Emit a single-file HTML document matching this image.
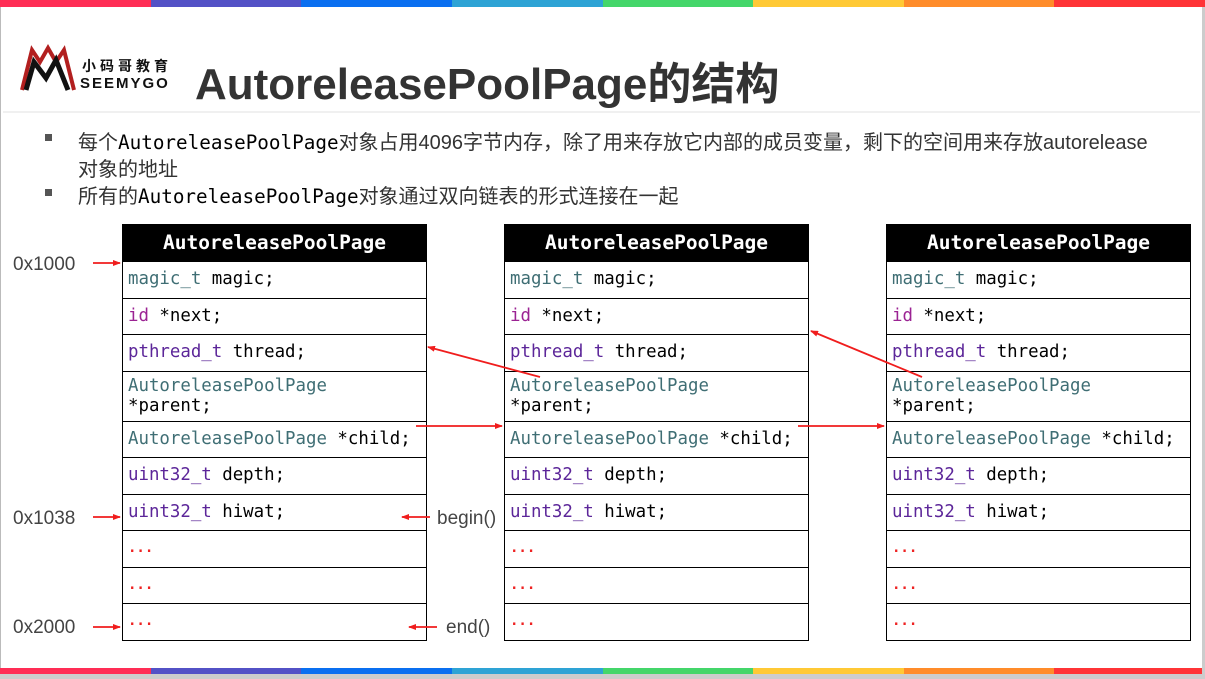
<!DOCTYPE html>
<html><head><meta charset="utf-8"><style>
*{margin:0;padding:0;box-sizing:border-box}
body{width:1205px;height:679px;overflow:hidden;background:#fff;position:relative;font-family:"Liberation Sans","Noto Sans CJK SC",sans-serif}
.bar{position:absolute;left:0;width:1205px;height:7px;display:flex}
.bar div{flex:1}
.t{position:absolute;left:0;width:305px;border:1.5px solid #000;border-top:none}
.t .h{height:37px;background:#000;color:#fff;font:bold 19.5px "DejaVu Sans Mono",monospace;text-align:center;line-height:37px}
.t .r{border-top:1.5px solid #000;height:36.5px;font:17.4px "DejaVu Sans Mono",monospace;padding-left:5px;line-height:34px;color:#000;white-space:nowrap}
.t .r2{height:50px;line-height:20px;padding-top:4px}
.tl{color:#3f6e74}.pu{color:#5c2699}.mg{color:#9b2393}
.t .r.dt{color:#e22;font-size:14px;font-weight:bold}
.lbl{position:absolute;font-size:19px;color:#444}
.bul{position:absolute;font-size:20px;color:#333;left:78px;white-space:nowrap}
.bul code{font-family:"DejaVu Sans Mono",monospace;font-size:19.3px;color:#000}
.sq{position:absolute;left:45px;width:7px;height:7px;background:#555}
</style></head><body>
<div class="bar" style="top:0"><div style="background:#ff2d55"></div><div style="background:#5351c6"></div><div style="background:#0a6ff0"></div><div style="background:#2ea3d5"></div><div style="background:#44d66a"></div><div style="background:#ffc935"></div><div style="background:#ff8c2a"></div><div style="background:#ff3437"></div></div>
<div class="bar" style="top:668px"><div style="background:#ff2d55"></div><div style="background:#5351c6"></div><div style="background:#0a6ff0"></div><div style="background:#2ea3d5"></div><div style="background:#44d66a"></div><div style="background:#ffc935"></div><div style="background:#ff8c2a"></div><div style="background:#ff3437"></div></div>
<div style="position:absolute;left:0;top:7px;width:1px;height:661px;background:#bbb"></div>
<div style="position:absolute;right:0;top:7px;width:3px;height:672px;background:#ccc"></div>
<div style="position:absolute;left:0;top:674px;width:1205px;height:5px;background:#ccc"></div>
<svg style="position:absolute;left:20px;top:40px" width="60" height="52" viewBox="0 0 60 52">
<path d="M2 50 L12 10 L20 22 L28 8 L36 22 L44 10 L54 50" fill="none" stroke="#b21f1f" stroke-width="4"/>
<path d="M6 50 L14 22 L26 38 L36 20 L48 50" fill="none" stroke="#111" stroke-width="5"/>
</svg>
<div style="position:absolute;left:82px;top:58px;font-size:14px;line-height:16px;font-weight:bold;letter-spacing:4px;color:#111">小码哥教育</div>
<div style="position:absolute;left:80px;top:76px;font-size:15px;line-height:16px;font-weight:bold;letter-spacing:2px;color:#111">SEEMYGO</div>
<div style="position:absolute;left:195px;top:48px;font-size:44px;font-weight:bold;color:#333">AutoreleasePoolPage的结构</div>
<div style="position:absolute;left:3px;top:111px;width:1197px;height:2px;background:#f0f0f0"></div>
<div class="sq" style="top:134px"></div>
<div class="bul" style="top:126px">每个<code>AutoreleasePoolPage</code>对象占用4096字节内存，除了用来存放它内部的成员变量，剩下的空间用来存放autorelease</div>
<div class="bul" style="top:153px">对象的地址</div>
<div class="sq" style="top:189px"></div>
<div class="bul" style="top:180px">所有的<code>AutoreleasePoolPage</code>对象通过双向链表的形式连接在一起</div>

<div class="t" style="left:122px;top:224px">
<div class="h">AutoreleasePoolPage</div>
<div class="r"><span class="tl">magic_t</span> magic;</div>
<div class="r"><span class="mg">id</span> *next;</div>
<div class="r"><span class="pu">pthread_t</span> thread;</div>
<div class="r r2"><span class="tl">AutoreleasePoolPage</span><br>*parent;</div>
<div class="r"><span class="tl">AutoreleasePoolPage</span> *child;</div>
<div class="r"><span class="pu">uint32_t</span> depth;</div>
<div class="r"><span class="pu">uint32_t</span> hiwat;</div>
<div class="r dt">...</div><div class="r dt">...</div><div class="r dt">...</div>
</div>
<div class="t" style="left:504px;top:224px">
<div class="h">AutoreleasePoolPage</div>
<div class="r"><span class="tl">magic_t</span> magic;</div>
<div class="r"><span class="mg">id</span> *next;</div>
<div class="r"><span class="pu">pthread_t</span> thread;</div>
<div class="r r2"><span class="tl">AutoreleasePoolPage</span><br>*parent;</div>
<div class="r"><span class="tl">AutoreleasePoolPage</span> *child;</div>
<div class="r"><span class="pu">uint32_t</span> depth;</div>
<div class="r"><span class="pu">uint32_t</span> hiwat;</div>
<div class="r dt">...</div><div class="r dt">...</div><div class="r dt">...</div>
</div>
<div class="t" style="left:886px;top:224px">
<div class="h">AutoreleasePoolPage</div>
<div class="r"><span class="tl">magic_t</span> magic;</div>
<div class="r"><span class="mg">id</span> *next;</div>
<div class="r"><span class="pu">pthread_t</span> thread;</div>
<div class="r r2"><span class="tl">AutoreleasePoolPage</span><br>*parent;</div>
<div class="r"><span class="tl">AutoreleasePoolPage</span> *child;</div>
<div class="r"><span class="pu">uint32_t</span> depth;</div>
<div class="r"><span class="pu">uint32_t</span> hiwat;</div>
<div class="r dt">...</div><div class="r dt">...</div><div class="r dt">...</div>
</div>

<div class="lbl" style="left:13px;top:254px">0x1000</div>
<div class="lbl" style="left:13px;top:508px">0x1038</div>
<div class="lbl" style="left:13px;top:617px">0x2000</div>
<div class="lbl" style="left:437px;top:508px">begin()</div>
<div class="lbl" style="left:446px;top:617px">end()</div>

<svg style="position:absolute;left:0;top:0" width="1205" height="679">
<defs><marker id="a" markerWidth="8" markerHeight="6" refX="7" refY="3" orient="auto" markerUnits="userSpaceOnUse"><path d="M0 0L8 3L0 6z" fill="#f01d1d"/></marker></defs>
<g stroke="#f01d1d" stroke-width="1.8" fill="none" marker-end="url(#a)">
<line x1="93" y1="263" x2="120" y2="263"/>
<line x1="93" y1="517" x2="120" y2="517"/>
<line x1="93" y1="627" x2="120" y2="627"/>
<line x1="430" y1="517" x2="402" y2="517"/>
<line x1="437" y1="627" x2="409" y2="627"/>
<line x1="540" y1="377" x2="428" y2="347"/>
<line x1="416" y1="426" x2="502" y2="426"/>
<line x1="922" y1="377" x2="811" y2="331"/>
<line x1="798" y1="426" x2="884" y2="426"/>
</g></svg>
</body></html>
